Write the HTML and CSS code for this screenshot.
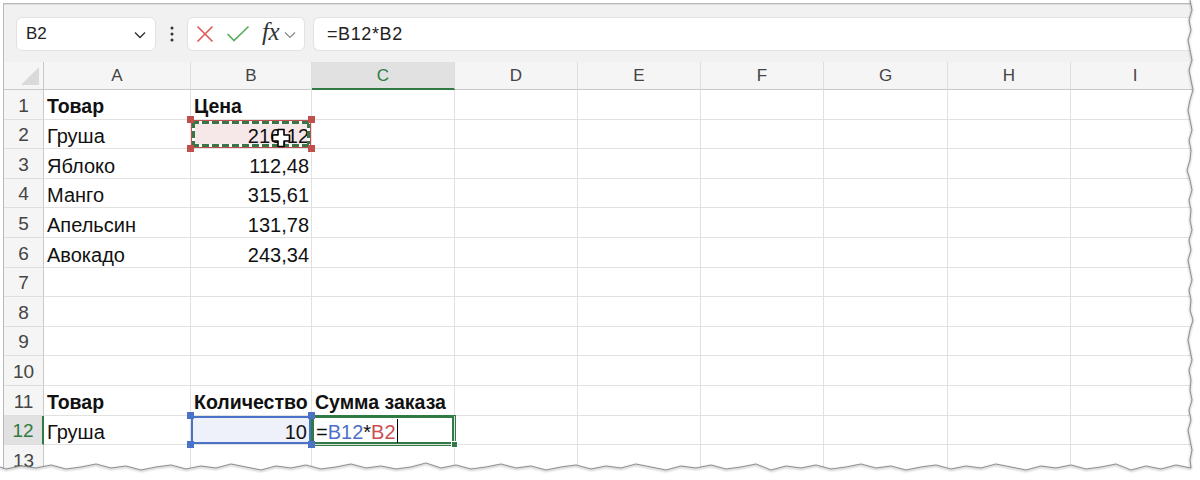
FILE: index.html
```html
<!DOCTYPE html>
<html lang="ru">
<head>
<meta charset="utf-8">
<title>Excel</title>
<link rel="stylesheet" href="styles.css">
</head>
<body>
<div class="page">
  <div class="fbar">
    <div class="namebox">
      <span>B2</span>
      <svg class="nb-chev" width="12" height="8" viewBox="0 0 12 8"><path d="M1 1.5 L6 6.5 L11 1.5" fill="none" stroke="#333" stroke-width="1.4"/></svg>
    </div>
    <svg class="dots" width="4" height="16" viewBox="0 0 4 16"><circle cx="2" cy="2" r="1.5" fill="#333"/><circle cx="2" cy="8" r="1.5" fill="#333"/><circle cx="2" cy="14" r="1.5" fill="#333"/></svg>
    <div class="fxbox">
      <svg width="18" height="18" viewBox="0 0 18 18"><path d="M1.5 1.5 L16.5 16.5 M16.5 1.5 L1.5 16.5" stroke="#e05c5c" stroke-width="1.7" fill="none"/></svg>
      <svg class="chk" width="24" height="18" viewBox="0 0 24 18"><path d="M1.5 9 L8 15.5 L22.5 1.5" stroke="#5aae5e" stroke-width="1.7" fill="none"/></svg>
      <span class="fx">fx</span>
      <svg class="fx-chev" width="12" height="8" viewBox="0 0 12 8"><path d="M1 1.5 L6 6.5 L11 1.5" fill="none" stroke="#888" stroke-width="1.2"/></svg>
    </div>
    <div class="formula">=B12*B2</div>
  </div>

  <div class="sheet">
    <div class="corner"><span class="tri"></span></div>
    <div class="ch">A</div><div class="ch">B</div><div class="ch sel">C</div><div class="ch">D</div><div class="ch">E</div><div class="ch">F</div><div class="ch">G</div><div class="ch">H</div><div class="ch">I</div>

    <div class="rh">1</div><div class="c b">Товар</div><div class="c b">Цена</div><div class="c"></div><div class="c"></div><div class="c"></div><div class="c"></div><div class="c"></div><div class="c"></div><div class="c"></div>

    <div class="rh">2</div><div class="c">Груша</div>
    <div class="c n refb2">216,12
      <span class="ants"></span>
      <i class="hd red tl"></i><i class="hd red tr"></i><i class="hd red bl"></i><i class="hd red br"></i>
      <svg class="cursor" width="20" height="20" viewBox="0 0 20 20"><path d="M7 1.5 H13 V7 H18.5 V13 H13 V18.5 H7 V13 H1.5 V7 H7 Z" fill="#fff" stroke="#000" stroke-width="1.6" stroke-linejoin="round"/></svg>
    </div>
    <div class="c"></div><div class="c"></div><div class="c"></div><div class="c"></div><div class="c"></div><div class="c"></div><div class="c"></div>

    <div class="rh">3</div><div class="c">Яблоко</div><div class="c n">112,48</div><div class="c"></div><div class="c"></div><div class="c"></div><div class="c"></div><div class="c"></div><div class="c"></div><div class="c"></div>

    <div class="rh">4</div><div class="c">Манго</div><div class="c n">315,61</div><div class="c"></div><div class="c"></div><div class="c"></div><div class="c"></div><div class="c"></div><div class="c"></div><div class="c"></div>

    <div class="rh">5</div><div class="c">Апельсин</div><div class="c n">131,78</div><div class="c"></div><div class="c"></div><div class="c"></div><div class="c"></div><div class="c"></div><div class="c"></div><div class="c"></div>

    <div class="rh">6</div><div class="c">Авокадо</div><div class="c n">243,34</div><div class="c"></div><div class="c"></div><div class="c"></div><div class="c"></div><div class="c"></div><div class="c"></div><div class="c"></div>

    <div class="rh">7</div><div class="c"></div><div class="c"></div><div class="c"></div><div class="c"></div><div class="c"></div><div class="c"></div><div class="c"></div><div class="c"></div><div class="c"></div>

    <div class="rh">8</div><div class="c"></div><div class="c"></div><div class="c"></div><div class="c"></div><div class="c"></div><div class="c"></div><div class="c"></div><div class="c"></div><div class="c"></div>

    <div class="rh">9</div><div class="c"></div><div class="c"></div><div class="c"></div><div class="c"></div><div class="c"></div><div class="c"></div><div class="c"></div><div class="c"></div><div class="c"></div>

    <div class="rh">10</div><div class="c"></div><div class="c"></div><div class="c"></div><div class="c"></div><div class="c"></div><div class="c"></div><div class="c"></div><div class="c"></div><div class="c"></div>

    <div class="rh">11</div><div class="c b">Товар</div><div class="c b">Количество</div><div class="c b">Сумма заказа</div><div class="c"></div><div class="c"></div><div class="c"></div><div class="c"></div><div class="c"></div><div class="c"></div>

    <div class="rh sel">12</div><div class="c">Груша</div>
    <div class="c n refb12">10
      <i class="hd blue tl"></i><i class="hd blue tr"></i><i class="hd blue bl"></i><i class="hd blue br"></i>
    </div>
    <div class="c active"><span>=</span><span class="rb">B12</span><span>*</span><span class="rr">B2</span><span class="caret"></span><i class="fill"></i></div>
    <div class="c"></div><div class="c"></div><div class="c"></div><div class="c"></div><div class="c"></div><div class="c"></div>

    <div class="rh">13</div><div class="c"></div><div class="c"></div><div class="c"></div><div class="c"></div><div class="c"></div><div class="c"></div><div class="c"></div><div class="c"></div><div class="c"></div>
  </div>

  <svg class="torn" width="1200" height="480" viewBox="0 0 1200 480">
    <path class="torn-fill" d="M1200 0 L1190 0 L1192 10 L1189 20 L1191 30 L1188 40 L1190 50 L1192 60 L1189 70 L1191 80 L1193 90 L1190 100 L1188 110 L1190 120 L1192 130 L1189 140 L1191 150 L1190 160 L1187 170 L1190 180 L1192 190 L1189 200 L1191 210 L1190 220 L1192 230 L1189 240 L1191 250 L1188 260 L1190 270 L1192 280 L1189 290 L1191 300 L1190 310 L1193 320 L1190 330 L1188 340 L1190 350 L1192 360 L1189 370 L1191 380 L1190 390 L1192 400 L1189 410 L1191 420 L1188 430 L1190 440 L1192 450 L1190 460 L1191 468 L1176 465 L1161 469 L1146 466 L1131 470 L1116 464 L1101 467 L1086 469 L1071 465 L1056 468 L1041 466 L1026 470 L1011 467 L996 464 L981 468 L966 466 L951 469 L936 465 L921 467 L906 470 L891 466 L876 468 L861 464 L846 467 L831 469 L816 465 L801 468 L786 466 L771 470 L756 464 L741 467 L726 469 L711 465 L696 468 L681 466 L666 470 L651 467 L636 464 L621 468 L606 466 L591 469 L576 465 L561 467 L546 470 L531 466 L516 468 L501 464 L486 467 L471 469 L456 465 L441 468 L426 463 L411 467 L396 469 L381 466 L366 468 L351 464 L336 467 L321 469 L306 465 L291 468 L276 466 L261 470 L246 467 L231 464 L216 468 L201 466 L186 469 L171 465 L156 467 L141 470 L126 466 L111 468 L96 464 L81 467 L66 469 L51 465 L36 468 L21 466 L6 469 L0 467 L0 480 L1200 480 Z"/>
    <path class="torn-line" d="M1190 0 L1192 10 L1189 20 L1191 30 L1188 40 L1190 50 L1192 60 L1189 70 L1191 80 L1193 90 L1190 100 L1188 110 L1190 120 L1192 130 L1189 140 L1191 150 L1190 160 L1187 170 L1190 180 L1192 190 L1189 200 L1191 210 L1190 220 L1192 230 L1189 240 L1191 250 L1188 260 L1190 270 L1192 280 L1189 290 L1191 300 L1190 310 L1193 320 L1190 330 L1188 340 L1190 350 L1192 360 L1189 370 L1191 380 L1190 390 L1192 400 L1189 410 L1191 420 L1188 430 L1190 440 L1192 450 L1190 460 L1191 468 L1176 465 L1161 469 L1146 466 L1131 470 L1116 464 L1101 467 L1086 469 L1071 465 L1056 468 L1041 466 L1026 470 L1011 467 L996 464 L981 468 L966 466 L951 469 L936 465 L921 467 L906 470 L891 466 L876 468 L861 464 L846 467 L831 469 L816 465 L801 468 L786 466 L771 470 L756 464 L741 467 L726 469 L711 465 L696 468 L681 466 L666 470 L651 467 L636 464 L621 468 L606 466 L591 469 L576 465 L561 467 L546 470 L531 466 L516 468 L501 464 L486 467 L471 469 L456 465 L441 468 L426 463 L411 467 L396 469 L381 466 L366 468 L351 464 L336 467 L321 469 L306 465 L291 468 L276 466 L261 470 L246 467 L231 464 L216 468 L201 466 L186 469 L171 465 L156 467 L141 470 L126 466 L111 468 L96 464 L81 467 L66 469 L51 465 L36 468 L21 466 L6 469 L0 467"/>
  </svg>
</div>
</body>
</html>
```

FILE: styles.css
```css
* { box-sizing: border-box; }
html, body { margin: 0; padding: 0; background: #fff; }
body { width: 1200px; height: 480px; overflow: hidden; font-family: "Liberation Sans", Arial, sans-serif; }

.page {
  position: relative;
  margin: 3px 0 0 3px;
  width: 1197px;
  height: 477px;
  border-left: 1px solid #b9b9b9;
  border-top: 1px solid #b9b9b9;
  background: #fff;
}

/* formula bar */
.fbar {
  height: 58px;
  background: #f1f1f1;
  border-top: 1px solid #dcdcdc;
  display: flex;
  align-items: flex-start;
  padding: 12px 0 0 12px;
}
.namebox {
  width: 140px;
  height: 34px;
  background: #fff;
  border: 1px solid #e2e2e2;
  border-radius: 6px;
  display: flex;
  align-items: center;
  justify-content: space-between;
  padding: 0 9px 0 9px;
  font-size: 17px;
  color: #222;
}
.nb-chev { margin-top: 2px; }
.dots { margin: 9px 13px 0 14px; }
.fxbox {
  width: 118px;
  height: 34px;
  background: #fff;
  border: 1px solid #e2e2e2;
  border-radius: 6px;
  display: flex;
  align-items: center;
  padding: 0 0 0 8px;
}
.chk { margin-left: 12px; }
.fx {
  margin-left: 12px;
  font-family: "Liberation Serif", "DejaVu Serif", serif;
  font-style: italic;
  font-size: 25px;
  color: #333;
  letter-spacing: -0.5px;
  margin-top: -4px;
}
.fx-chev { margin-left: 5px; margin-top: 2px; }
.formula {
  flex: 1;
  margin-left: 8px;
  height: 34px;
  background: #fff;
  border: 1px solid #e2e2e2;
  border-right: none;
  border-radius: 6px 0 0 6px;
  display: flex;
  align-items: center;
  padding-left: 13px;
  font-size: 18px;
  letter-spacing: 0.6px;
  color: #222;
}

/* sheet grid */
.sheet {
  display: grid;
  grid-template-columns: 40px 147px 121px 143px 123px 123px 123px 124px 123px 1fr;
  grid-template-rows: 28px repeat(13, 29.6px);
  font-size: 20px;
  color: #111;
}
.corner {
  background: #f5f5f5;
  border-right: 1px solid #c9c9c9;
  border-bottom: 1px solid #c9c9c9;
  position: relative;
}
.tri {
  position: absolute;
  right: 4px;
  bottom: 4px;
  width: 0; height: 0;
  border-left: 18px solid transparent;
  border-bottom: 18px solid #dadada;
}
.ch {
  background: #f5f5f5;
  border-right: 1px solid #dedede;
  border-bottom: 1px solid #c9c9c9;
  display: flex;
  align-items: center;
  justify-content: center;
  font-size: 17px;
  color: #444;
  padding-top: 1px;
}
.ch.sel {
  background: #e1e1e1;
  border-bottom: 2px solid #2f7a45;
  color: #2f7a45;
}
.rh {
  background: #f5f5f5;
  border-right: 1px solid #c9c9c9;
  border-bottom: 1px solid #dedede;
  display: flex;
  align-items: flex-end;
  justify-content: center;
  padding-bottom: 2px;
  font-size: 19px;
  color: #444;
}
.rh.sel {
  background: #e1e1e1;
  border-right: 2px solid #2f7a45;
  color: #2f7a45;
}
.c {
  position: relative;
  border-right: 1px solid #e1e1e1;
  border-bottom: 1px solid #e1e1e1;
  display: flex;
  align-items: flex-end;
  padding: 0 2px 2px 3px;
  white-space: nowrap;
  line-height: 1;
}
.c.b { font-weight: bold; font-size: 19.5px; }
.c.n { justify-content: flex-end; }

/* B2 reference */
.refb2 {
  background: #f6e7e8;
  box-shadow: inset 0 0 0 1px #c0504d;
}
.ants {
  position: absolute;
  inset: 1px 1px 1px 1px;
  background:
    repeating-linear-gradient(90deg, #3a7547 0 7px, #fff 7px 10px) top / 100% 3px no-repeat,
    repeating-linear-gradient(90deg, #3a7547 0 7px, #fff 7px 10px) bottom / 100% 3px no-repeat,
    repeating-linear-gradient(180deg, #3a7547 0 7px, #fff 7px 10px) left / 3px 100% no-repeat,
    repeating-linear-gradient(180deg, #3a7547 0 7px, #fff 7px 10px) right / 3px 100% no-repeat;
  pointer-events: none;
}
.hd {
  position: absolute;
  width: 7px;
  height: 7px;
  z-index: 3;
}
.hd.red { background: #c0504d; }
.hd.blue { background: #4a72c6; }
.hd.tl { left: -4px; top: -4px; }
.hd.tr { right: -4px; top: -4px; }
.hd.bl { left: -4px; bottom: -4px; }
.hd.br { right: -4px; bottom: -4px; }
.cursor {
  position: absolute;
  left: 80px;
  top: 8px;
  z-index: 4;
}

/* B12 reference */
.refb12 {
  background: #eef0fa;
  box-shadow: inset 0 0 0 2px #4a72c6;
  padding-right: 4px;
}

/* active cell C12 */
.active {
  box-shadow: 0 0 0 1px #2f7a45, inset 0 0 0 2px #2f7a45;
  z-index: 2;
  padding-left: 4px;
}
.rb { color: #4d6fc9; }
.rr { color: #c9504f; }
.caret {
  display: inline-block;
  width: 1px;
  height: 24px;
  background: #000;
  margin-left: 1px;
  margin-bottom: -1px;
}
.fill {
  position: absolute;
  right: -4px;
  bottom: -4px;
  width: 7px;
  height: 7px;
  background: #2f7a45;
  border: 1px solid #fff;
}

/* torn edge */
.torn {
  position: absolute;
  left: -4px;
  top: -4px;
  z-index: 10;
  pointer-events: none;
}
.torn-fill { fill: #fff; }
.torn-line {
  fill: none;
  stroke: #8f8f8f;
  stroke-width: 1;
  filter: drop-shadow(0 1px 1px rgba(0,0,0,0.4));
}
```
